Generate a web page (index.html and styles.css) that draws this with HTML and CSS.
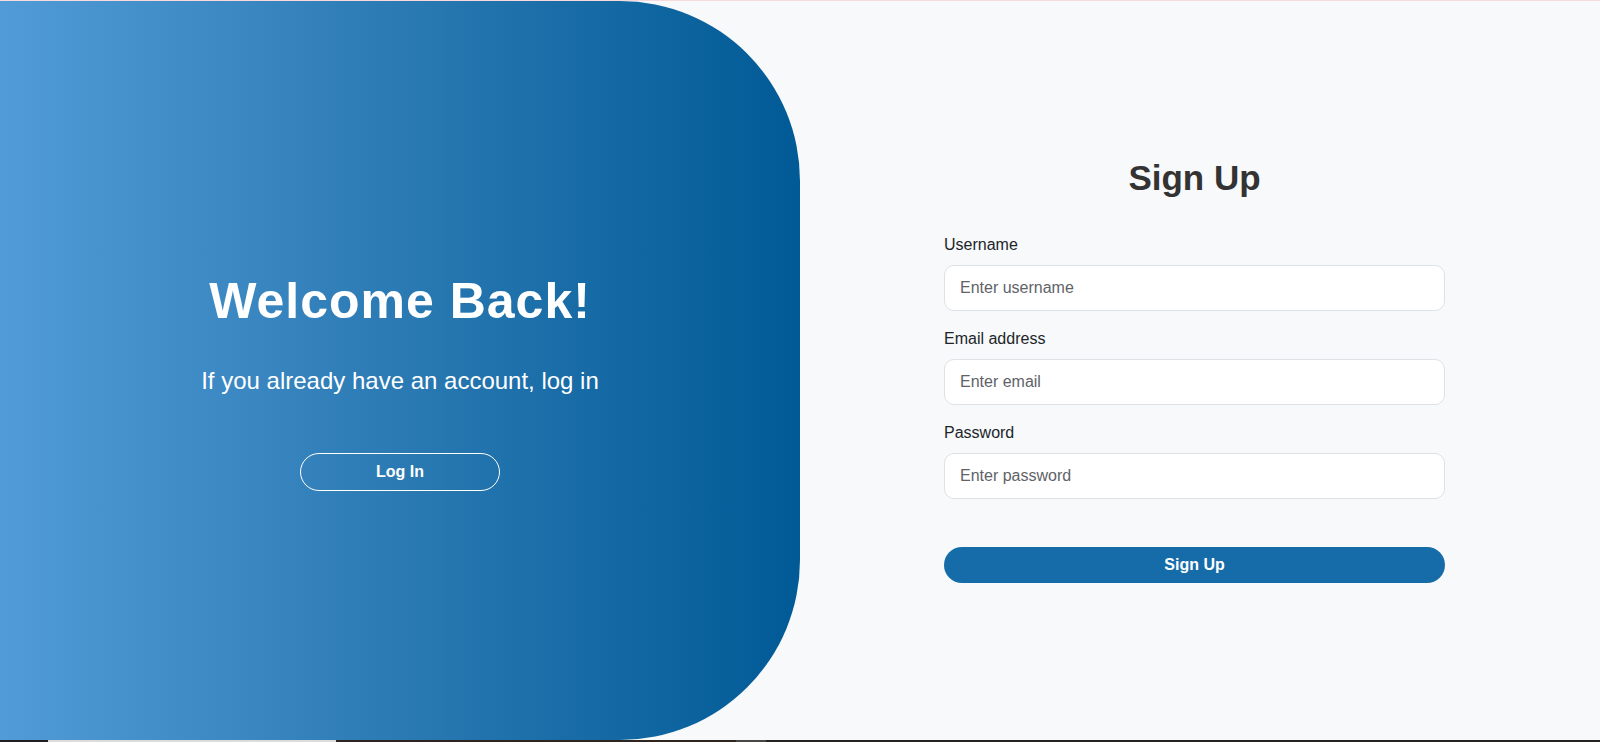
FILE: index.html
```html
<!DOCTYPE html>
<html lang="en">
<head>
<meta charset="utf-8">
<title>Sign Up</title>
<link rel="stylesheet" href="styles.css">
</head>
<body>
<div class="topline"></div>
<main class="auth">
  <section class="welcome">
    <h1 class="welcome-title">Welcome Back!</h1>
    <p class="welcome-text">If you already have an account, log in</p>
    <button class="btn-outline" type="button">Log In</button>
  </section>
  <section class="signup">
    <form class="signup-form">
      <h2 class="signup-title">Sign Up</h2>
      <div class="field">
        <label class="field-label" for="username">Username</label>
        <input class="field-input" id="username" type="text" placeholder="Enter username">
      </div>
      <div class="field">
        <label class="field-label" for="email">Email address</label>
        <input class="field-input" id="email" type="email" placeholder="Enter email">
      </div>
      <div class="field">
        <label class="field-label" for="password">Password</label>
        <input class="field-input" id="password" type="password" placeholder="Enter password">
      </div>
      <button class="btn-primary" type="button">Sign Up</button>
    </form>
  </section>
</main>
<div class="bottomstrip">
  <span class="seg seg-a"></span>
  <span class="seg seg-b"></span>
  <span class="seg seg-c"></span>
  <span class="seg seg-d"></span>
  <span class="seg seg-e"></span>
</div>
</body>
</html>
```
FILE: styles.css
```css
* {
  box-sizing: border-box;
}

html, body {
  margin: 0;
  padding: 0;
}

body {
  height: 742px;
  overflow: hidden;
  display: flex;
  flex-direction: column;
  font-family: "Liberation Sans", Arial, sans-serif;
  background: #f7f9fb;
}

.topline {
  height: 1px;
  background: #f8d9dc;
  flex: none;
}

.auth {
  flex: 1;
  display: flex;
  min-height: 0;
}

.welcome {
  width: 800px;
  flex: none;
  display: flex;
  flex-direction: column;
  align-items: center;
  justify-content: center;
  padding-top: 22px;
  background: linear-gradient(90deg, #519cd8 0%, #2f7db6 45%, #005a96 100%);
  border-radius: 0 180px 180px 0;
  color: #fff;
}

.welcome-title {
  margin: 0;
  font-size: 50px;
  font-weight: 700;
  letter-spacing: 1px;
  line-height: normal;
}

.welcome-text {
  margin: 37px 0 0;
  font-size: 24px;
  line-height: normal;
}

.btn-outline {
  margin-top: 58px;
  width: 200px;
  height: 38px;
  border: 1px solid #fff;
  border-radius: 20px;
  background: transparent;
  color: #fff;
  font-family: inherit;
  font-size: 16px;
  font-weight: 700;
  cursor: pointer;
}

.signup {
  flex: 1;
  display: flex;
  align-items: center;
  justify-content: center;
  padding-right: 11px;
}

.signup-form {
  width: 501px;
  display: flex;
  flex-direction: column;
}

.signup-title {
  margin: 0 0 35px;
  text-align: center;
  font-size: 35px;
  font-weight: 700;
  color: #333;
  line-height: normal;
}

.field {
  display: flex;
  flex-direction: column;
  margin-bottom: 16px;
}

.field-label {
  font-size: 16px;
  line-height: 24px;
  color: #212529;
  margin-bottom: 8px;
}

.field-input {
  height: 46px;
  padding: 0 15px;
  border: 1px solid #dee2e6;
  border-radius: 10px;
  background: #fff;
  font-family: inherit;
  font-size: 16px;
  color: #212529;
  outline: none;
}

.field-input::placeholder {
  color: #5f6368;
}

.btn-primary {
  margin-top: 32px;
  height: 36px;
  border: none;
  border-radius: 18px;
  background: #166ca9;
  color: #fff;
  font-family: inherit;
  font-size: 16px;
  font-weight: 700;
  cursor: pointer;
}

.bottomstrip {
  height: 2px;
  flex: none;
  display: flex;
  background: #2a2420;
}

.seg {
  display: block;
  height: 100%;
}

.seg-a { width: 48px; background: #1f1f22; }
.seg-b { width: 288px; background: #dcdcdc; }
.seg-c { width: 400px; background: #2e2420; }
.seg-d { width: 30px; background: #4a4644; }
.seg-e { flex: 1; background: #252220; }
```
